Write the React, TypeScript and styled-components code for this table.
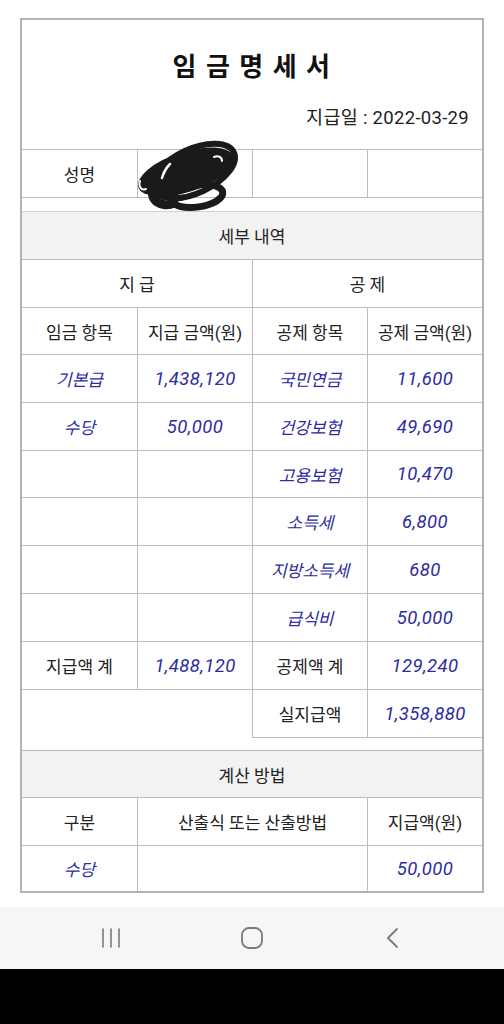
import React from "react";
import styled, { createGlobalStyle } from "styled-components";

const Global = createGlobalStyle`
  html, body { margin: 0; padding: 0; background: #ffffff; }
  body { font-family: "Roboto", "Noto Sans CJK KR", sans-serif; color: #222; }
`;

const Screen = styled.div`
  display: flex;
  flex-direction: column;
  height: 1024px;
  width: 504px;
  overflow: hidden;
`;

const Content = styled.main`
  flex: 1;
  min-height: 0;
  padding: 18px 20px 0;
  background: #ffffff;
`;

const Sheet = styled.section`
  width: 464px;
  box-sizing: border-box;
  border: 2px solid #b3b3b3;
  position: relative;
`;

const TitleBlock = styled.header`
  height: 130px;
  box-sizing: border-box;
  border-bottom: 1px solid #bdbdbd;
  display: flex;
  flex-direction: column;
  padding: 0 13px 0 0;
`;

const Title = styled.h1`
  margin: 29px 0 0;
  height: 36px;
  line-height: 36px;
  font-size: 26px;
  font-weight: 700;
  letter-spacing: 1.5px;
  text-align: center;
  color: #111;
  padding-left: 13px;
`;

const PayDate = styled.div`
  margin-top: 21px;
  text-align: right;
  font-size: 18.5px;
  line-height: 24px;
  letter-spacing: 0.3px;
  color: #222;
`;

const Grid = styled.div`
  display: grid;
  grid-template-columns: 116px 115px 115px 114px;
  grid-template-rows: 48px 14px 48px 48px 47px 48px 48px 47px 48px 48px 48px 48px 48px 13px 47px 48px 45px;
`;

type CellProps = {
  $span?: number;
  $edge?: boolean;
  $open?: boolean;
  $shade?: boolean;
  $blue?: boolean;
  $num?: boolean;
  $lastRow?: boolean;
  $soft?: boolean;
};

const Cell = styled.div<CellProps>`
  grid-column: span ${(p) => p.$span ?? 1};
  box-sizing: border-box;
  border-right: ${(p) => (p.$edge ? "none" : "1px solid #bdbdbd")};
  border-bottom: ${(p) =>
    p.$open || p.$lastRow ? "none" : p.$soft ? "1px solid #d0d0d0" : "1px solid #bdbdbd"};
  background: ${(p) => (p.$shade ? "#f2f2f2" : "#ffffff")};
  display: flex;
  align-items: center;
  justify-content: center;
  font-size: ${(p) => (p.$num ? "18.5px" : "17px")};
  letter-spacing: ${(p) => (p.$num ? "0.4px" : "0")};
  color: ${(p) => (p.$blue || p.$num ? "#2c2ca3" : "#222")};
  font-style: ${(p) => (p.$blue || p.$num ? "italic" : "normal")};
  white-space: nowrap;
  position: relative;
`;

const Scribble = styled.svg`
  position: absolute;
  left: -4px;
  top: -7px;
  width: 106px;
  height: 70px;
  overflow: visible;
  z-index: 2;
`;

const NavBar = styled.nav`
  height: 62px;
  background: #f6f6f6;
  display: flex;
  align-items: center;
  justify-content: center;
  gap: 117px;
`;

const NavButton = styled.div`
  width: 24px;
  height: 24px;
  display: flex;
  align-items: center;
  justify-content: center;
`;

const BottomBar = styled.div`
  height: 55px;
  background: #000;
`;

const pay = [
  ["기본급", "1,438,120", "국민연금", "11,600"],
  ["수당", "50,000", "건강보험", "49,690"],
  ["", "", "고용보험", "10,470"],
  ["", "", "소득세", "6,800"],
  ["", "", "지방소득세", "680"],
  ["", "", "급식비", "50,000"],
];

export default function App() {
  return (
    <Screen>
      <Global />
      <Content>
        <Sheet>
          <TitleBlock>
            <Title>임 금 명 세 서</Title>
            <PayDate>지급일 : 2022-03-29</PayDate>
          </TitleBlock>
          <Grid>
            <Cell>성명</Cell>
            <Cell>
              <Scribble viewBox="0 0 106 70">
                <ellipse cx="52" cy="29" rx="50" ry="20" transform="rotate(-18 52 29)" fill="#1a1a1a" />
                <ellipse cx="60" cy="28" rx="44" ry="22" transform="rotate(-25 60 28)" fill="none" stroke="#1a1a1a" strokeWidth="6" />
                <ellipse cx="63" cy="53" rx="26" ry="11" transform="rotate(-8 63 53)" fill="none" stroke="#1a1a1a" strokeWidth="7" />
                <path d="M20 46 C 14 56, 28 66, 40 60" fill="none" stroke="#1a1a1a" strokeWidth="9" strokeLinecap="round" />
                <path d="M28 35 C 30 28, 33 24, 36 21" fill="none" stroke="#ffffff" strokeWidth="2.5" strokeLinecap="round" />
                <path d="M80 14 C 84 12, 88 14, 88 18" fill="none" stroke="#ffffff" strokeWidth="2" strokeLinecap="round" />
                <path d="M6 38 C 4 44, 8 48, 12 46" fill="none" stroke="#ffffff" strokeWidth="2" strokeLinecap="round" />
              </Scribble>
            </Cell>
            <Cell />
            <Cell $edge />

            <Cell $span={4} $edge $soft />

            <Cell $span={4} $edge $shade>세부 내역</Cell>

            <Cell $span={2}>지 급</Cell>
            <Cell $span={2} $edge>공 제</Cell>

            <Cell>임금 항목</Cell>
            <Cell>지급 금액(원)</Cell>
            <Cell>공제 항목</Cell>
            <Cell $edge>공제 금액(원)</Cell>

            {pay.map((r, i) => (
              <React.Fragment key={i}>
                <Cell $blue>{r[0]}</Cell>
                <Cell $num>{r[1]}</Cell>
                <Cell $blue>{r[2]}</Cell>
                <Cell $num $edge>{r[3]}</Cell>
              </React.Fragment>
            ))}

            <Cell>지급액 계</Cell>
            <Cell $num>1,488,120</Cell>
            <Cell>공제액 계</Cell>
            <Cell $num $edge>129,240</Cell>

            <Cell $span={2} $open />
            <Cell>실지급액</Cell>
            <Cell $num $edge>1,358,880</Cell>

            <Cell $span={4} $edge />

            <Cell $span={4} $edge $shade>계산 방법</Cell>

            <Cell>구분</Cell>
            <Cell $span={2}>산출식 또는 산출방법</Cell>
            <Cell $edge>지급액(원)</Cell>

            <Cell $blue $lastRow>수당</Cell>
            <Cell $span={2} $lastRow />
            <Cell $num $edge $lastRow>50,000</Cell>
          </Grid>
        </Sheet>
      </Content>
      <NavBar>
        <NavButton>
          <svg width="22" height="22" viewBox="0 0 22 22">
            <g stroke="#7a7a7a" strokeWidth="1.6" strokeLinecap="round">
              <line x1="3" y1="2" x2="3" y2="20" />
              <line x1="11" y1="2" x2="11" y2="20" />
              <line x1="19" y1="2" x2="19" y2="20" />
            </g>
          </svg>
        </NavButton>
        <NavButton>
          <svg width="24" height="24" viewBox="0 0 24 24">
            <rect x="2" y="2" width="20" height="20" rx="7" fill="none" stroke="#7a7a7a" strokeWidth="1.8" />
          </svg>
        </NavButton>
        <NavButton>
          <svg width="16" height="22" viewBox="0 0 16 22">
            <polyline points="12,2 3,11 12,20" fill="none" stroke="#7a7a7a" strokeWidth="1.8" strokeLinecap="round" strokeLinejoin="round" />
          </svg>
        </NavButton>
      </NavBar>
      <BottomBar />
    </Screen>
  );
}
